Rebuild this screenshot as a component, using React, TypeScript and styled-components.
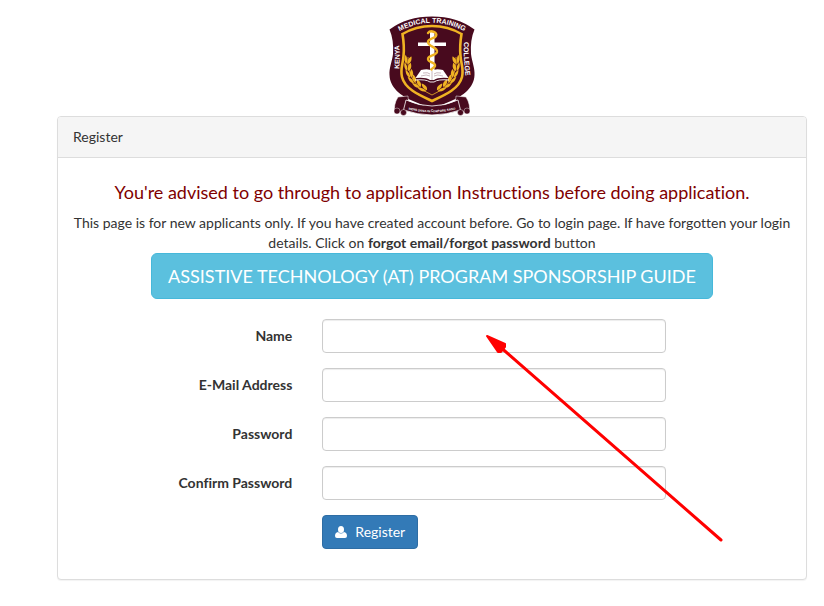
import React from "react";
import styled, { createGlobalStyle } from "styled-components";

const Global = createGlobalStyle`
  *, *::before, *::after { box-sizing: border-box; }
  body {
    margin: 0;
    background: #fff;
    color: #333;
    font: 14px/20px Lato, sans-serif;
    font-variant-ligatures: none;
  }
`;

const Page = styled.main`
  padding: 16px 17px 26px 57px;
`;
const CrestDrawing = styled.svg`
  display: block;
  width: 86px;
  height: 100px;
  margin: 0 auto;
  overflow: visible;
`;
const CrestText = styled.text`
  fill: #fff;
  font-family: "Liberation Sans", Arial, sans-serif;
  font-size: 7px;
  font-weight: 700;
`;
const MottoText = styled(CrestText)`
  font-size: 3px;
`;
const Panel = styled.section`
  background: #fff;
  border: 1px solid #ddd;
  border-radius: 4px;
  box-shadow: 0 1px 1px rgba(0, 0, 0, 0.05);
`;
const PanelHeading = styled.header`
  padding: 10px 15px;
  background: #f5f5f5;
  border-bottom: 1px solid #ddd;
  border-radius: 3px 3px 0 0;
`;
const PanelBody = styled.div`
  position: relative;
  padding: 15px;
`;
const Intro = styled.div`
  text-align: center;
`;
const Advice = styled.h1`
  margin: 10px 0 12px;
  color: #800000;
  font-size: 18px;
  font-weight: 400;
  line-height: 18px;
`;
const Note = styled.p`
  margin: 0;
`;
const GuideLink = styled.a`
  display: inline-block;
  padding: 10px 16px;
  border: 1px solid #46b8da;
  border-radius: 6px;
  background: #5bc0de;
  color: #fff;
  font-size: 18px;
  line-height: 24px;
  text-decoration: none;
`;
const Form = styled.form`
  display: grid;
  gap: 15px;
  margin: 20px -15px 15px;
`;
const Field = styled.div`
  display: grid;
  grid-template-columns: 4fr 6fr 2fr;
`;
const Label = styled.label`
  padding: 7px 15px;
  font-weight: 700;
  text-align: right;
`;
const Control = styled.div`
  grid-column: 2;
  padding: 0 15px;
`;
const Input = styled.input`
  display: block;
  width: 100%;
  height: 34px;
  padding: 6px 12px;
  border: 1px solid #ccc;
  border-radius: 4px;
  font: inherit;
  box-shadow: inset 0 1px 1px rgba(0, 0, 0, 0.075);
`;
const Submit = styled.button`
  display: flex;
  align-items: center;
  gap: 8px;
  height: 34px;
  padding: 6px 12px;
  border: 1px solid #2e6da4;
  border-radius: 4px;
  background: #337ab7;
  color: #fff;
  font: inherit;
  cursor: pointer;
`;
const UserGlyph = styled.svg`
  width: 12px;
  height: 12px;
  fill: currentColor;
`;
const Pointer = styled.svg`
  position: absolute;
  top: 176px;
  left: calc(50% + 52px);
  width: 240px;
  height: 210px;
  pointer-events: none;
`;

const maroon = "#480a1e";
const gold = "#f0b323";

const leaves = [
  [17, 44, 8],
  [17, 51, -4],
  [19, 58, -18],
  [22, 64, -32],
  [27, 69, -46],
  [33, 73, -58],
];

function Wreath() {
  return (
    <g fill={gold}>
      <path d="M19 41Q17 67 43 79" fill="none" stroke={gold} strokeWidth="0.8" />
      {leaves.map(([x, y, turn]) => (
        <g key={y} transform={`translate(${x + 1} ${y}) rotate(${turn})`}>
          <path d="M0 4C-3 2-3-2-2-5C0-2 1 0 0 4Z" />
          <path d="M1 4C0 0 2-3 4-4C5 0 4 3 1 4Z" />
        </g>
      ))}
    </g>
  );
}

function Crest() {
  return (
    <CrestDrawing viewBox="0 0 86 100" role="img" aria-label="Kenya Medical Training College">
      <defs>
        <path id="crest-top" d="M5 18.500Q43-5 81 18.500" />
        <path id="crest-left" d="M10 56Q11.500 42 10 26" />
        <path id="crest-right" d="M75 24Q74 42 77 62" />
        <path id="crest-motto" d="M18 93Q43 99.500 68 93" />
      </defs>
      <path
        fill={maroon}
        d="M0.500 13.500Q18 0.500 43 0.500Q68 0.500 85.500 13.500Q81 24 82 38C83 46 86 52 85.500 59C85 72 74 80 62 85L43 93L24 85C12 80 1 72 0.500 59C0 52 3 46 4 38Q5 24 0.500 13.500Z"
      />
      <path
        fill={maroon}
        stroke={gold}
        strokeWidth="2.6"
        d="M13.500 18Q27 10 43 10Q59 10 72.500 18Q70.500 30 71.500 40C72 48 75 53 73 61C70 73 56 79 43 85C30 79 16 73 13 61C11 53 14 48 14.500 40Q15.500 30 13.500 18Z"
      />
      <Wreath />
      <g transform="matrix(-1 0 0 1 86 0)">
        <Wreath />
      </g>
      <path fill="#fff" d="M41 16h4.500v10.500H57v3.500H45.500V58H41V30H29v-3.500h12z" />
      <path
        fill="none"
        stroke={gold}
        strokeWidth="2.4"
        strokeLinecap="round"
        d="M39 17C42 13 49 17 47 20C46 23 39 22 39 26C39 31 49 31 48 36C47 40 39 39 39 43C39 47 47 46 46 50C45 53 40 52 43 56"
      />
      <path
        fill="#fff"
        d="M26.500 62L32 54Q40 52 43 55Q46 52 54 54L59.500 62Q49 61 45 64H41Q37 61 26.500 62Z"
      />
      <path
        fill="none"
        stroke={maroon}
        strokeWidth="0.3"
        d="M43 55V64M34 57Q39 56 41 58M32 60Q38 58 41 60M52 57Q47 56 45 58M54 60Q48 58 45 60"
      />
      <path fill="none" stroke="#fff" strokeWidth="0.9" d="M26 64Q37 63 41 66H45Q49 63 60 64" />
      <g fill={maroon} stroke="#fff" strokeWidth="0.5">
        <path d="M9 81L19 80L20 93L6 97Q4 89 9 81Z" />
        <path d="M77 81L67 80L66 93L80 97Q82 89 77 81Z" />
      </g>
      <path fill={maroon} stroke="#fff" strokeWidth="0.8" d="M17 84Q43 96 69 84L71.500 94Q43 104 14.500 94Z" />
      <g fill={maroon} stroke="#fff" strokeWidth="0.4">
        <circle cx="8" cy="95" r="3" />
        <circle cx="14.500" cy="96.500" r="3" />
        <circle cx="78" cy="95" r="3" />
        <circle cx="71.500" cy="96.500" r="3" />
      </g>
      <CrestText textAnchor="middle">
        <textPath href="#crest-top" startOffset="50%">MEDICAL TRAINING</textPath>
      </CrestText>
      <CrestText textAnchor="middle">
        <textPath href="#crest-left" startOffset="50%">KENYA</textPath>
      </CrestText>
      <CrestText textAnchor="middle">
        <textPath href="#crest-right" startOffset="50%">COLLEGE</textPath>
      </CrestText>
      <MottoText textAnchor="middle">
        <textPath href="#crest-motto" startOffset="50%">MENS SANA IN CORPORE SANO</textPath>
      </MottoText>
    </CrestDrawing>
  );
}

const fields = [
  { id: "name", label: "Name", type: "text" },
  { id: "email", label: "E-Mail Address", type: "email" },
  { id: "password", label: "Password", type: "password" },
  { id: "confirm", label: "Confirm Password", type: "password" },
];

export default function App() {
  return (
    <Page>
      <Global />
      <Crest />
      <Panel>
        <PanelHeading>Register</PanelHeading>
        <PanelBody>
          <Intro>
            <Advice>You're advised to go through to application Instructions before doing application.</Advice>
            <Note>
              This page is for new applicants only. If you have created account before. Go to login page. If have
              forgotten your login details. Click on <strong>forgot email/forgot password</strong> button
            </Note>
            <GuideLink href="#guide">ASSISTIVE TECHNOLOGY (AT) PROGRAM SPONSORSHIP GUIDE</GuideLink>
          </Intro>
          <Form>
            {fields.map((field) => (
              <Field key={field.id}>
                <Label htmlFor={field.id}>{field.label}</Label>
                <Control>
                  <Input id={field.id} name={field.id} type={field.type} />
                </Control>
              </Field>
            ))}
            <Field>
              <Control>
                <Submit type="submit">
                  <UserGlyph viewBox="0 0 12 12" aria-hidden="true">
                    <ellipse cx="6" cy="3.5" rx="3" ry="3.500" />
                    <path d="M3 6Q6 9 9 6Q12 6.500 12 10Q12 12 10 12H2Q0 12 0 10Q0 6.500 3 6Z" />
                  </UserGlyph>
                  Register
                </Submit>
              </Control>
            </Field>
          </Form>
          <Pointer viewBox="0 0 240 210" aria-hidden="true">
            <path d="M14 11L237 206" fill="none" stroke="red" strokeWidth="3" strokeLinecap="round" />
            <path d="M3 2L21 10V13L17 18H14Z" fill="red" stroke="red" strokeWidth="2" strokeLinejoin="round" />
          </Pointer>
        </PanelBody>
      </Panel>
    </Page>
  );
}
